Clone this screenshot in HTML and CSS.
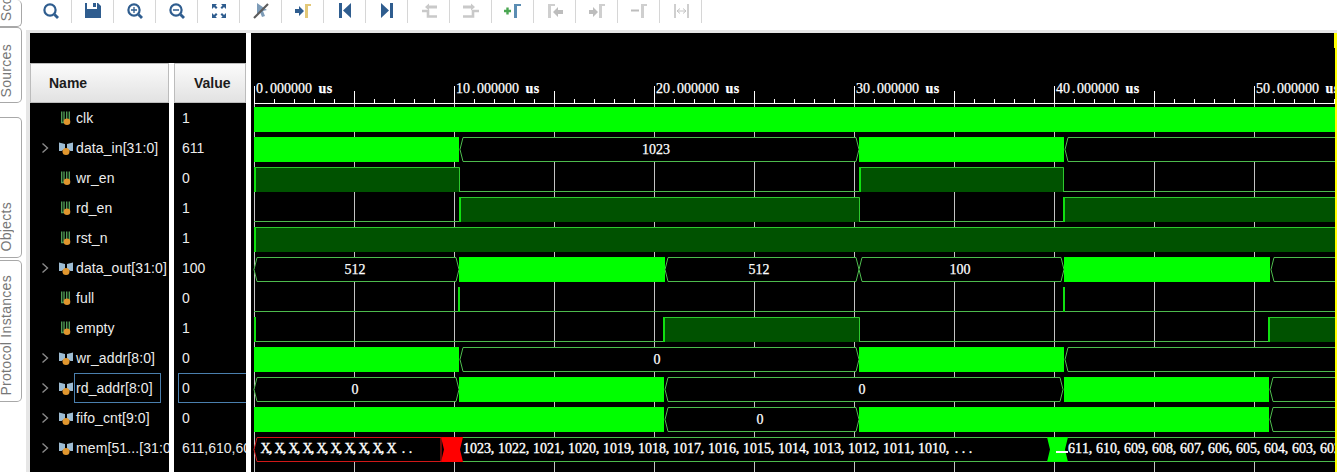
FILE: index.html
```html
<!DOCTYPE html>
<html lang="en">
<head>
    <meta charset="UTF-8">
    <title>Waveform</title>
    <link rel="stylesheet" href="styles.css">
</head>
<body>
    <svg class="sprite">
        <symbol id="lens" viewBox="0 0 24 22">
            <circle cx="11" cy="10" r="5.6" fill="none" stroke="#2f5d8f" stroke-width="2.2"/>
            <path d="M15.5 14.5l3.5 3.5" stroke="#2f5d8f" stroke-width="2.8"/>
        </symbol>
        <symbol id="chev" viewBox="0 0 8 12">
            <path d="M1.5 1.5L6.5 6L1.5 10.5" fill="none" stroke="#8a8a8a" stroke-width="1.4"/>
        </symbol>
        <symbol id="scalar" viewBox="0 0 14 16">
            <path d="M2.700 1.500v11h2.300v-11M7.700 1.500v9h2.600v-9" fill="none" stroke="#4f9a55" stroke-width="1.400"/>
            <circle cx="8" cy="11.800" r="3.300" fill="#e0962e"/>
        </symbol>
        <symbol id="vector" viewBox="0 0 14 16">
            <path d="M0 2.500l6 1.500v5l-3.500 2H0zM14 2.500l-6 1.500v5l3.500 2H14z" fill="#9dbcd3"/>
            <circle cx="7" cy="11.500" r="3.500" fill="#e0962e"/>
        </symbol>
    </svg>

    <div class="app">
        <div class="sidebar">
            <div class="tab tab-scope"><span>Scope</span></div>
            <div class="tab tab-sources"><span>Sources</span></div>
            <div class="tab tab-objects"><span>Objects</span></div>
            <div class="tab tab-protocol"><span>Protocol Instances</span></div>
        </div>

        <div class="main">
            <div class="toolbar">
                <div class="tool"><svg class="icon"><use href="#lens"/></svg></div>
                <div class="tool">
                    <svg class="icon" viewBox="0 0 24 22"><path d="M4 3h2v6h10V3h1l3 3v12H4z" fill="#2f5d8f"/><path d="M12 3h3v4h-3z" fill="#2f5d8f"/></svg>
                </div>
                <div class="tool">
                    <svg class="icon" viewBox="0 0 24 22"><use href="#lens"/><path d="M8 10h6M11 7v6" stroke="#2f5d8f" stroke-width="1.300"/></svg>
                </div>
                <div class="tool">
                    <svg class="icon" viewBox="0 0 24 22"><use href="#lens"/><path d="M8 10h6" stroke="#2f5d8f" stroke-width="1.500"/></svg>
                </div>
                <div class="tool">
                    <svg class="icon" viewBox="0 0 24 22"><path d="M5 4h5L8.500 5.500 10.500 7.500 9 9 7 7 5 9zM19 4h-5l1.500 1.500-2 2L15 9l2-2 2 2zM5 18h5l-1.500-1.500 2-2L9 13l-2 2-2-2zM19 18h-5l1.500-1.500-2-2L15 13l2 2 2-2z" fill="#2f5d8f"/></svg>
                </div>
                <div class="tool">
                    <svg class="icon" viewBox="0 0 24 22"><path d="M8 3l10 7-4 1 2 5-3 1-2-5-3 3z" fill="#7d9cb8"/><path d="M5 18L19 4" stroke="#5c5c5c" stroke-width="2.200"/></svg>
                </div>
                <div class="tool">
                    <svg class="icon" viewBox="0 0 24 22"><path d="M14 4h6v2h-3v12h-3z" fill="#e3c878"/><path d="M4 9h4V6l5 5-5 5v-3H4z" fill="#2f5d8f"/></svg>
                </div>
                <div class="tool">
                    <svg class="icon" viewBox="0 0 24 22"><path d="M6 3h3v15H6zM18 3v15L10 10.500z" fill="#2f5d8f"/></svg>
                </div>
                <div class="tool">
                    <svg class="icon" viewBox="0 0 24 22"><path d="M6 3v15l8-7.500zM15 3h3v15h-3z" fill="#2f5d8f"/></svg>
                </div>
                <div class="tool">
                    <svg class="icon" viewBox="0 0 24 22"><path d="M5 11h6v5.500h9" fill="none" stroke="#c9c9c9" stroke-width="2.600"/><path d="M12 3.500L8 7l4 3.500V8.500h8v-3h-8z" fill="#c9c9c9"/></svg>
                </div>
                <div class="tool">
                    <svg class="icon" viewBox="0 0 24 22"><path d="M4 16.500h10V11h6" fill="none" stroke="#c9c9c9" stroke-width="2.600"/><path d="M4 5.500h8v-2L16 7l-4 3.500v-2H4z" fill="#c9c9c9"/></svg>
                </div>
                <div class="tool">
                    <svg class="icon" viewBox="0 0 24 22"><path d="M3 11h7M6.500 7.500v7" stroke="#4aa651" stroke-width="2.400"/><path d="M13 4h7v2h-4v12h-3z" fill="#5b8db3"/></svg>
                </div>
                <div class="tool">
                    <svg class="icon" viewBox="0 0 24 22"><path d="M5 4h7v2H8v12H5z" fill="#cfcfcf"/><path d="M20 10h-5V7l-5 5 5 5v-3h5z" fill="#bdbdbd"/></svg>
                </div>
                <div class="tool">
                    <svg class="icon" viewBox="0 0 24 22"><path d="M14 4h6v2h-3v12h-3z" fill="#cfcfcf"/><path d="M4 10h4V7l5 5-5 5v-3H4z" fill="#bdbdbd"/></svg>
                </div>
                <div class="tool">
                    <svg class="icon" viewBox="0 0 24 22"><path d="M14 4h6v2h-3v12h-3z" fill="#cfcfcf"/><path d="M4 10.500h8" stroke="#bdbdbd" stroke-width="2"/></svg>
                </div>
                <div class="tool">
                    <svg class="icon" viewBox="0 0 24 22"><path d="M5 4h2v14H5zM18 4h2v14h-2z" fill="#cfcfcf"/><path d="M8 11h9M8 11l3-2.500M8 11l3 2.500M17 11l-3-2.500M17 11l-3 2.500" fill="none" stroke="#c4c4c4"/></svg>
                </div>
            </div>

            <div class="panes">
                <div class="signals">
                    <div class="signals-top"></div>
                    <div class="columns">
                        <div class="col col-name">
                            <div class="col-head">Name</div>
                            <div class="row"><span class="chev"></span><svg class="sig"><use href="#scalar"/></svg><span class="label">clk</span></div>
                            <div class="row"><svg class="chev"><use href="#chev"/></svg><svg class="sig"><use href="#vector"/></svg><span class="label">data_in[31:0]</span></div>
                            <div class="row"><span class="chev"></span><svg class="sig"><use href="#scalar"/></svg><span class="label">wr_en</span></div>
                            <div class="row"><span class="chev"></span><svg class="sig"><use href="#scalar"/></svg><span class="label">rd_en</span></div>
                            <div class="row"><span class="chev"></span><svg class="sig"><use href="#scalar"/></svg><span class="label">rst_n</span></div>
                            <div class="row"><svg class="chev"><use href="#chev"/></svg><svg class="sig"><use href="#vector"/></svg><span class="label">data_out[31:0]</span></div>
                            <div class="row"><span class="chev"></span><svg class="sig"><use href="#scalar"/></svg><span class="label">full</span></div>
                            <div class="row"><span class="chev"></span><svg class="sig"><use href="#scalar"/></svg><span class="label">empty</span></div>
                            <div class="row"><svg class="chev"><use href="#chev"/></svg><svg class="sig"><use href="#vector"/></svg><span class="label">wr_addr[8:0]</span></div>
                            <div class="row"><svg class="chev"><use href="#chev"/></svg><svg class="sig"><use href="#vector"/></svg><span class="label selected">rd_addr[8:0]</span></div>
                            <div class="row"><svg class="chev"><use href="#chev"/></svg><svg class="sig"><use href="#vector"/></svg><span class="label">fifo_cnt[9:0]</span></div>
                            <div class="row"><svg class="chev"><use href="#chev"/></svg><svg class="sig"><use href="#vector"/></svg><span class="label">mem[51...[31:0]</span></div>
                        </div>
                        <div class="col col-value">
                            <div class="col-head">Value</div>
                            <div class="row value">1</div>
                            <div class="row value">611</div>
                            <div class="row value">0</div>
                            <div class="row value">1</div>
                            <div class="row value">1</div>
                            <div class="row value">100</div>
                            <div class="row value">0</div>
                            <div class="row value">1</div>
                            <div class="row value">0</div>
                            <div class="row value selected">0</div>
                            <div class="row value">0</div>
                            <div class="row value">611,610,609,608</div>
                        </div>
                    </div>
                </div>
                <div class="wave">
                    <svg id="wave-svg" viewBox="251 33 1086 439" width="1086" height="439"></svg>
                </div>
            </div>
        </div>
    </div>
    <script src="wave.js"></script>
</body>
</html>
```

FILE: styles.css
```css
html, body {
    margin: 0;
    padding: 0;
    height: 472px;
    overflow: hidden;
    background: #fff;
    font-family: 'Liberation Sans', Arial, sans-serif;
    font-size: 14px;
}

.sprite {
    display: none;
}

.app {
    display: flex;
    height: 472px;
}

/* vertical tabs on the left */
.sidebar {
    width: 26px;
    flex: none;
    display: flex;
    flex-direction: column;
}

.tab {
    width: 22px;
    box-sizing: border-box;
    display: flex;
    flex-direction: column;
    justify-content: flex-end;
    align-items: flex-start;
    overflow: hidden;
    border: 1px solid #a8a8a8;
    border-left: none;
    border-radius: 0 5px 5px 0;
    color: #777;
    font-size: 14px;
}

.tab span {
    writing-mode: vertical-rl;
    transform: rotate(180deg);
    flex: none;
    white-space: nowrap;
    letter-spacing: 0.3px;
    line-height: 13px;
    padding-top: 5px;
}

.tab-scope {
    height: 27px;
    border-top: none;
}

.tab-sources {
    height: 76px;
}

.tab-objects {
    height: 141px;
    margin-top: 14px;
}

.tab-protocol {
    height: 142px;
    margin-top: 2px;
}

.main {
    flex: 1;
    min-width: 0;
    display: flex;
    flex-direction: column;
}

/* toolbar */
.toolbar {
    height: 30px;
    flex: none;
    box-sizing: border-box;
    padding-left: 4px;
    display: flex;
    align-items: flex-start;
    background: #fff;
}

.tool {
    width: 42px;
    height: 23px;
    box-sizing: border-box;
    border-right: 1px solid #d6d6d6;
    display: flex;
    justify-content: center;
}

.icon {
    width: 24px;
    height: 22px;
}

.panes {
    flex: 1;
    min-height: 0;
    display: flex;
    border-top: 3px solid #e6e6e6;
    border-left: 4px solid #e6e6e6;
}

/* name / value columns */
.signals {
    width: 216px;
    flex: none;
    display: flex;
    flex-direction: column;
}

.signals-top {
    height: 30px;
    flex: none;
    background: #000;
}

.columns {
    flex: 1;
    display: flex;
    gap: 5px;
}

.col {
    background: #000;
    color: #ececec;
    overflow: hidden;
}

.col-name {
    width: 139px;
}

.col-value {
    width: 72px;
}

.col-head {
    height: 40px;
    box-sizing: border-box;
    padding-left: 18px;
    display: flex;
    align-items: center;
    border: 1px solid #bcbcbc;
    background: linear-gradient(#fbfbfb, #e2e2e2);
    color: #1c1c1c;
    font-weight: bold;
}

.col-value .col-head {
    padding-left: 19px;
}

.row {
    height: 30px;
    display: flex;
    align-items: center;
    white-space: nowrap;
}

.chev {
    width: 8px;
    height: 12px;
    flex: none;
    margin-left: 11px;
}

.sig {
    width: 14px;
    height: 16px;
    flex: none;
    margin-left: 10px;
}

.label {
    height: 30px;
    box-sizing: border-box;
    flex: none;
    display: flex;
    align-items: center;
    margin-left: 1px;
    padding: 0 7px 0 1px;
    border: 1px solid transparent;
    letter-spacing: 0.1px;
}

.value {
    box-sizing: border-box;
    padding-left: 8px;
}

.label.selected {
    border-color: #4a7fae;
}

.value.selected {
    margin-left: 4px;
    padding-left: 3px;
    border: 1px solid #4a7fae;
    border-right: none;
}

/* waveform area */
.wave {
    flex: 1;
    margin-left: 5px;
    background: #000;
    overflow: hidden;
}

#wave-svg {
    display: block;
}

.wave-text {
    fill: #fff;
    stroke: #fff;
    stroke-width: 0.25px;
    font-family: 'Liberation Serif', 'Times New Roman', serif;
    font-size: 14px;
}

.wave-unit {
    font-weight: bold;
}

.wave-mem {
    stroke-width: 0.35px;
}
```

FILE: wave.js
```js
// Waveform canvas, coordinates are page pixels (see viewBox)
const svg = document.getElementById('wave-svg');
const GREEN = '#00ff00';
const LINE = '#4dbb4d';
const DARK = '#005200';
const RIGHT = 1337;
const START = 254;
const CELL = 7; // every glyph sits in a 7px cell

let out = '';

function line(x1, y1, x2, y2, color, w = 1) {
    out += `<line x1="${x1}" y1="${y1}" x2="${x2}" y2="${y2}" stroke="${color}" stroke-width="${w}"/>`;
}

function rect(x, y, w, h, color) {
    out += `<rect x="${x}" y="${y}" width="${w}" height="${h}" fill="${color}"/>`;
}

function text(str, x, y, cls = '') {
    // commas hug the digit before them
    const xs = Array.from(str, (c, i) => x + i * CELL + CELL / 2 - (c === ',' ? 2 : 0)).join(' ');
    const safe = str.replace(/ /g, '\u00a0');
    out += `<text class="wave-text ${cls}" x="${xs}" y="${y}" text-anchor="middle">${safe}</text>`;
}

// Centre a label on x
function centred(str, x, y) {
    text(str, x - (str.length * CELL) / 2, y);
}

function hollowBus(x0, x1, top, color = LINE) {
    const t = top + 0.5, b = top + 24.5, m = top + 12.5;
    const end = x1 >= RIGHT ? `${RIGHT + 5},${t} ${RIGHT + 5},${b}` : `${x1 - 3},${t} ${x1},${m} ${x1 - 3},${b}`;
    out += `<polygon points="${x0},${m} ${x0 + 3},${t} ${end} ${x0 + 3},${b}" fill="#000" stroke="${color}"/>`;
}

// Ruler and grid
for (let x = START; x < RIGHT; x += 100) {
    line(x + 0.5, 103, x + 0.5, 472, '#c4c4c4');
}
line(START, 103.5, RIGHT, 103.5, '#fff');
for (let x = START; x < RIGHT; x += 20) {
    const major = (x - START) % 200 === 0;
    const mid = (x - START) % 100 === 0;
    const top = major ? 86 : mid ? 91 : 99;
    line(x + 0.5, top, x + 0.5, 103, '#fff');
}
[0, 10, 20, 30, 40, 50].forEach((t, i) => {
    const x = 256 + i * 200;
    const label = `${t}.000000`;
    text(label, x, 93);
    text('us', x + (label.length + 1) * CELL, 93, 'wave-unit');
});

const rowTop = i => 107 + 30 * i;

// One-bit signals: list of high ranges
function logic(i, highs) {
    const top = rowTop(i);
    line(START, top + 24.5, RIGHT, top + 24.5, LINE);
    highs.forEach(([a, b]) => {
        if (b - a > 3) {
            rect(a, top, Math.min(b, RIGHT) - a, 25, DARK);
            out += `<path d="M${a + 0.5} ${top + 25}V${top + 0.5}H${b - 0.5}V${top + 25}" fill="none" stroke="#2ec82e"/>`;
            rect(a, top, 2, 25, '#10e010');
        } else {
            rect(a, top, b - a, 25, '#10e010');
        }
    });
}

// Buses: [start, end] is solid, [start, end, label, labelX] is a hollow bus
function bus(i, segs) {
    const top = rowTop(i);
    segs.forEach(([a, b, label, lx]) => {
        if (label === undefined) {
            rect(a, top, Math.min(b, RIGHT) - a, 25, GREEN);
        } else {
            hollowBus(a, b, top);
            if (label) centred(label, lx, top + 17);
        }
    });
}

rect(START, rowTop(0), RIGHT - START, 25, GREEN); // clk
bus(1, [[START, 459], [460, 859, '1023', 656], [859, 1064], [1065, RIGHT, '']]);
logic(2, [[START, 460], [859, 1064]]);
logic(3, [[459, 860], [1063, RIGHT + 2]]);
logic(4, [[START, RIGHT + 2]]);
bus(5, [[START, 459, '512', 355], [459, 665], [665, 859, '512', 759], [859, 1064, '100', 960], [1064, 1270], [1271, RIGHT, '']]);
logic(6, [[458, 460], [1063, 1065]]);
logic(7, [[START, 256], [663, 860], [1268, RIGHT + 2]]);
bus(8, [[START, 459], [460, 859, '0', 657], [859, 1064], [1065, RIGHT, '']]);
bus(9, [[START, 459, '0', 355], [459, 664], [665, 1063, '0', 862], [1064, 1269], [1270, RIGHT, '']]);
bus(10, [[START, 664], [665, 859, '0', 760], [859, 1269], [1270, RIGHT, '']]);

// mem row: red undefined part, then the long value lists
const mt = rowTop(11);
const memY = mt + 16;
rect(442, mt, RIGHT - 442, 25, '#000');
line(442, mt + 0.5, RIGHT, mt + 0.5, LINE);
line(442, mt + 24.5, RIGHT, mt + 24.5, LINE);
out += `<polygon points="${START},${mt + 12.5} ${START + 3},${mt + 0.5} 441,${mt + 0.5} 441,${mt + 24.5} ${START + 3},${mt + 24.5}" fill="#000" stroke="#d01818"/>`;
out += `<polygon points="441,${mt} 463,${mt} 460,${mt + 12.5} 463,${mt + 25} 441,${mt + 25} 444,${mt + 12.5}" fill="#ff0000"/>`;
out += `<polygon points="1047,${mt} 1068,${mt} 1065,${mt + 12.5} 1068,${mt + 25} 1047,${mt + 25} 1050,${mt + 12.5}" fill="${GREEN}"/>`;
rect(1056, mt + 14, 12, 2, '#fff');

const xs = Array(10).fill('X').join(',');
text(`${xs}`, 262, memY, 'wave-mem');
text('..', 400, memY, 'wave-mem');

let list = '';
for (let n = 1023; n >= 1010; n--) list += `${n},`;
text(`${list}...`, 463, memY, 'wave-mem');

let list2 = '';
for (let n = 611; n >= 602; n--) list2 += `${n},`;
text(list2, 1068, memY, 'wave-mem');

// Cursor
rect(1335, 33, 2, 439, '#ffff00');
rect(1334, 33, 3, 15, '#ffff00');

svg.innerHTML = out;
```
